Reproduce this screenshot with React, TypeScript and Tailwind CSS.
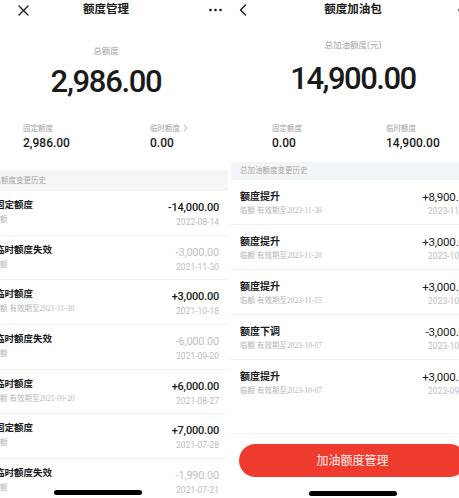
import React from 'react'

type Row = {
  title: string
  sub: string
  until?: string
  amount: string
  date: string
  muted?: boolean
}

const leftRows: Row[] = [
  { title: '固定额度', sub: '固额', amount: '-14,000.00', date: '2022-08-14' },
  { title: '临时额度失效', sub: '临额', amount: '-3,000.00', date: '2021-11-30', muted: true },
  { title: '临时额度', sub: '临额', until: '2021-11-30', amount: '+3,000.00', date: '2021-10-18' },
  { title: '临时额度失效', sub: '临额', amount: '-6,000.00', date: '2021-09-20', muted: true },
  { title: '临时额度', sub: '临额', until: '2021-09-20', amount: '+6,000.00', date: '2021-08-27' },
  { title: '固定额度', sub: '固额', amount: '+7,000.00', date: '2021-07-28' },
  { title: '临时额度失效', sub: '临额', amount: '-1,990.00', date: '2021-07-21', muted: true },
]

const rightRows: Row[] = [
  { title: '额度提升', sub: '临额', until: '2023-11-30', amount: '+8,900.00', date: '2023-11-01' },
  { title: '额度提升', sub: '临额', until: '2023-11-20', amount: '+3,000.00', date: '2023-10-21' },
  { title: '额度提升', sub: '临额', until: '2023-11-15', amount: '+3,000.00', date: '2023-10-16' },
  { title: '额度下调', sub: '临额', until: '2023-10-07', amount: '-3,000.00', date: '2023-10-07' },
  { title: '额度提升', sub: '临额', until: '2023-10-07', amount: '+3,000.00', date: '2023-09-08' },
]

function Sub({ row }: { row: Row }) {
  return (
    <>
      {row.sub}
      {row.until && (
        <>
          <span className="ml-[2px]">有效期至</span>
          <span className="font-['Liberation_Serif',serif]">{row.until}</span>
        </>
      )}
    </>
  )
}

function CloseIcon() {
  return (
    <svg width="11" height="11" viewBox="0 0 11 11" fill="none">
      <path d="M1 1L10 10M10 1L1 10" stroke="#1a1a1a" strokeWidth="1.3" strokeLinecap="round" />
    </svg>
  )
}

function Dots() {
  return (
    <svg width="13" height="4" viewBox="0 0 13 4">
      <circle cx="1.5" cy="2" r="1.3" fill="#1a1a1a" />
      <circle cx="6.5" cy="2" r="1.3" fill="#1a1a1a" />
      <circle cx="11.5" cy="2" r="1.3" fill="#1a1a1a" />
    </svg>
  )
}

function BackIcon() {
  return (
    <svg width="8" height="12" viewBox="0 0 8 12" fill="none">
      <path d="M6.5 1L1.5 6L6.5 11" stroke="#1a1a1a" strokeWidth="1.4" strokeLinecap="round" strokeLinejoin="round" />
    </svg>
  )
}

function HomeBar() {
  return <div className="mx-auto h-[5px] w-[88px] rounded-full bg-black" />
}

export default function App() {
  return (
    <div className="flex h-[498px] w-[459px] overflow-hidden bg-white font-['Roboto','Noto_Sans_CJK_SC',sans-serif] text-[#1a1a1a]">
      {/* left screen, cropped on the left */}
      <div className="relative h-full w-[228px] shrink-0 overflow-hidden">
        <div className="ml-[-16px] w-[244px]">
          <div className="grid h-[20px] grid-cols-[1fr_auto_1fr] items-center">
            <div className="pl-[34px]"><CloseIcon /></div>
            <div className="text-[11.5px] font-bold">额度管理</div>
            <div className="flex justify-end pr-[6px]"><Dots /></div>
          </div>

          <div className="mt-[25px] text-center text-[8.5px] leading-[12px] text-[#a5a5a5]">总额度</div>
          <div className="mt-[7px] text-center text-[31px] font-medium leading-[36px] tracking-[-1.3px]">2,986.00</div>

          <div className="mt-[22.5px] grid grid-cols-[127px_1fr] pl-[39px]">
            <div>
              <div className="text-[7.5px] leading-[11px] text-[#a5a5a5]">固定额度</div>
              <div className="mt-[2px] text-[12px] font-medium leading-[15px]">2,986.00</div>
            </div>
            <div>
              <div className="flex items-center gap-[3px] text-[7.5px] leading-[11px] text-[#a5a5a5]">
                临时额度
                <svg width="5" height="8" viewBox="0 0 5 8" fill="none">
                  <path d="M1 1L4 4L1 7" stroke="#a5a5a5" strokeWidth="0.9" />
                </svg>
              </div>
              <div className="mt-[2px] text-[12px] font-medium leading-[15px]">0.00</div>
            </div>
          </div>

          <div className="mt-[19.5px] flex h-[21px] items-center bg-[#f6f6f6] pl-[9.5px] text-[7.5px] text-[#a8a8a8]">
            总额度变更历史
          </div>

          {leftRows.map((row, i) => (
            <div key={i} className="flex h-[44.7px] justify-between border-b border-[#f2f2f2] pr-[9px]">
              <div className="pt-[5px]">
                <div className="pl-[11px] text-[9.5px] font-bold leading-[18px]">{row.title}</div>
                <div className="pl-[8.5px] text-[7.5px] leading-[11px] text-[#b5b5b5]">
                  <Sub row={row} />
                </div>
              </div>
              <div className="pt-[9px] text-right">
                <div
                  className={
                    row.muted
                      ? 'text-[11px] leading-[16px] tracking-[-0.2px] text-[#c2c2c2]'
                      : 'text-[11px] font-medium leading-[16px] tracking-[-0.2px] text-[#1a1a1a]'
                  }
                >
                  {row.amount}
                </div>
                <div className="text-[8.5px] leading-[12px] text-[#bdbdbd]">{row.date}</div>
              </div>
            </div>
          ))}
        </div>
        <div className="absolute bottom-[3px] left-0 right-0 flex justify-center">
          <div className="h-[5px] w-[88px] translate-x-[-16px] rounded-full bg-black" />
        </div>
      </div>

      <div className="w-[2px] shrink-0" />

      {/* right screen, cropped on the right */}
      <div className="h-full flex-1 overflow-hidden">
        <div className="flex h-full w-[246px] flex-col">
          <div className="grid h-[20px] grid-cols-[1fr_auto_1fr] items-center">
            <div className="pl-[9px]"><BackIcon /></div>
            <div className="text-[11.5px] font-bold">额度加油包</div>
            <div className="flex justify-end pr-[5px]"><Dots /></div>
          </div>

          <div className="mt-[19px] text-center text-[8.5px] leading-[12px] text-[#a5a5a5]">总加油额度(元)</div>
          <div className="mt-[10px] text-center text-[31px] font-medium leading-[36px] tracking-[-1.5px]">14,900.00</div>

          <div className="mt-[25.5px] grid grid-cols-[114px_1fr] pl-[42px]">
            <div>
              <div className="text-[7.5px] leading-[11px] text-[#a5a5a5]">固定额度</div>
              <div className="mt-[2px] text-[12px] font-medium leading-[15px]">0.00</div>
            </div>
            <div>
              <div className="text-[7.5px] leading-[11px] text-[#a5a5a5]">临时额度</div>
              <div className="mt-[2px] text-[12px] font-medium leading-[15px]">14,900.00</div>
            </div>
          </div>

          <div className="ml-[1px] mt-[11.5px] flex h-[18px] items-center bg-[#f3f6f8] pl-[9px] text-[7.5px] text-[#a8a8a8]">
            总加油额度变更历史
          </div>

          {rightRows.map((row, i) => (
            <div
              key={i}
              className={`flex h-[45px] shrink-0 justify-between pl-[10px] pr-[5px] ${
                i < rightRows.length - 1 ? 'border-b border-[#f2f2f2]' : ''
              }`}
            >
              <div className="pt-[9px]">
                <div className="text-[10px] font-bold leading-[16px]">{row.title}</div>
                <div className="text-[7.5px] leading-[12px] text-[#b5b5b5]">
                  <Sub row={row} />
                </div>
              </div>
              <div className="pt-[9px] text-right">
                <div className="text-[11.5px] leading-[16px] tracking-[-0.2px]">{row.amount}</div>
                <div className="text-[8.5px] leading-[12px] text-[#bdbdbd]">{row.date}</div>
              </div>
            </div>
          ))}

          <div className="mt-[28px] border-t border-[#f4f4f4] pt-[10px]">
            <button className="ml-[9px] flex h-[33px] w-[227px] items-center justify-center rounded-full bg-[#ef3b2d] text-[12px] text-[#fff1ee]">
              加油额度管理
            </button>
            <div className="mt-[14px]">
              <HomeBar />
            </div>
          </div>
        </div>
      </div>
    </div>
  )
}
